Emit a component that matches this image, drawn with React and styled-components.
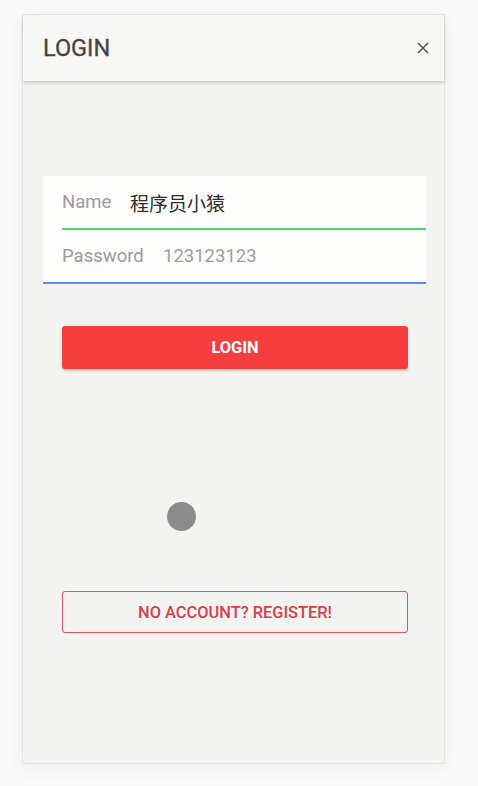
import React from "react";
import styled, { createGlobalStyle } from "styled-components";

const Global = createGlobalStyle`
  html, body { margin: 0; padding: 0; background: #fafafa; }
  body { font-family: Roboto, "Noto Sans CJK SC", sans-serif; }
`;

const Page = styled.div`
  padding: 14px 0 0 22px;
  height: 786px;
  box-sizing: border-box;
`;

const Frame = styled.div`
  width: 423px;
  height: 750px;
  box-sizing: border-box;
  background: #f3f3f2;
  border: 1px solid #e4e4e3;
  box-shadow: 0 4px 18px rgba(0, 0, 0, 0.06);
  display: flex;
  flex-direction: column;
`;

const Header = styled.div`
  height: 66px;
  flex: none;
  background: #f7f7f6;
  display: flex;
  align-items: center;
  justify-content: space-between;
  padding: 0 13px 0 20px;
  box-shadow: 0 2px 3px rgba(0, 0, 0, 0.16);
  position: relative;
  z-index: 1;
`;

const Title = styled.div`
  font-size: 23.5px;
  font-weight: 400;
  color: #444;
  -webkit-text-stroke: 0.3px #444;
`;

const Close = styled.button`
  border: none;
  background: none;
  padding: 0;
  width: 16px;
  height: 16px;
  display: flex;
  align-items: center;
  justify-content: center;
  cursor: pointer;
`;

const Body = styled.div`
  flex: 1;
  display: flex;
  flex-direction: column;
  align-items: flex-start;
  padding: 95px 18px 0 20px;
`;

const Form = styled.div`
  background: #fdfdfc;
  display: flex;
  flex-direction: column;
  align-self: stretch;
`;

const Field = styled.div`
  height: 52px;
  margin-left: ${(p) => p.$indent}px;
  display: flex;
  align-items: center;
  padding-left: ${(p) => 19 - p.$indent}px;
  border-bottom: 2px solid ${(p) => p.$line};
`;

const Label = styled.span`
  font-size: 18.5px;
  color: #9b9b9b;
  width: ${(p) => p.$w}px;
  flex: none;
`;

const Value = styled.span`
  font-size: ${(p) => (p.$dark ? 19 : 18.5)}px;
  color: ${(p) => (p.$dark ? "#2e2e2e" : "#a0a0a0")};
  font-family: Roboto, "Noto Sans CJK SC", sans-serif;
`;

const Button = styled.button`
  margin: ${(p) => p.$mt}px 0 0 19px;
  width: 346px;
  height: ${(p) => (p.$outline ? 42 : 43)}px;
  box-sizing: border-box;
  border-radius: 3px;
  font-family: Roboto, sans-serif;
  font-size: 16.4px;
  cursor: pointer;
  ${(p) =>
    p.$outline
      ? `
    background: transparent;
    border: 1.5px solid #e5525b;
    color: #d6404b;
    font-weight: 500;
  `
      : `
    background: #f53e3e;
    border: none;
    color: #fff;
    font-weight: 700;
    box-shadow: 0 2px 3px rgba(0,0,0,0.2);
  `}
`;

const Dot = styled.div`
  width: 29px;
  height: 29px;
  border-radius: 50%;
  background: #8c8c8c;
  margin: 133px 0 0 124px;
`;

export default function App() {
  return (
    <>
      <Global />
      <Page>
        <Frame>
          <Header>
            <Title>LOGIN</Title>
            <Close aria-label="close">
              <svg width="12" height="12" viewBox="0 0 12 12">
                <path d="M1 1L11 11M11 1L1 11" stroke="#555" strokeWidth="1.6" />
              </svg>
            </Close>
          </Header>
          <Body>
            <Form>
              <Field $indent={19} $line="#4cd964">
                <Label $w={68}>Name</Label>
                <Value $dark>程序员小猿</Value>
              </Field>
              <Field $indent={0} $line="#5b8ff5">
                <Label $w={101}>Password</Label>
                <Value>123123123</Value>
              </Field>
            </Form>
            <Button $mt={42}>LOGIN</Button>
            <Dot />
            <Button $outline $mt={60}>NO ACCOUNT? REGISTER!</Button>
          </Body>
        </Frame>
      </Page>
    </>
  );
}
